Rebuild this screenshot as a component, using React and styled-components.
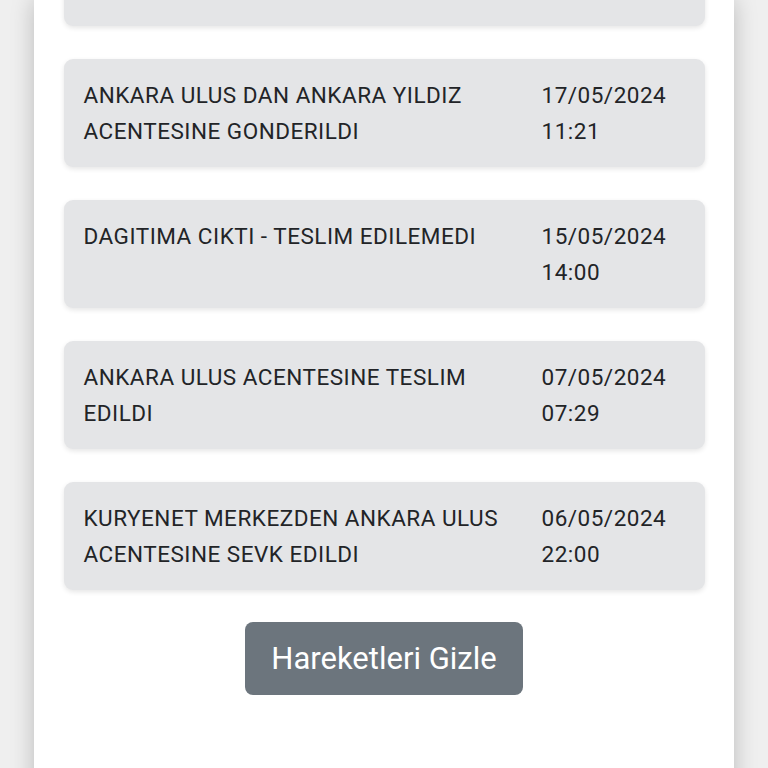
import React from "react";
import styled, { createGlobalStyle } from "styled-components";

const GlobalStyle = createGlobalStyle`
  html, body {
    margin: 0;
    padding: 0;
    height: 100%;
    overflow: hidden;
    background: #efefef;
    font-family: Roboto, "Liberation Sans", sans-serif;
  }
`;

const movements = [
  { text: "ANKARA ULUS DAN ANKARA YILDIZ ACENTESINE GONDERILDI", date: "17/05/2024", time: "11:21" },
  { text: "DAGITIMA CIKTI - TESLIM EDILEMEDI", date: "15/05/2024", time: "14:00" },
  { text: "ANKARA ULUS ACENTESINE TESLIM EDILDI", date: "07/05/2024", time: "07:29" },
  { text: "KURYENET MERKEZDEN ANKARA ULUS ACENTESINE SEVK EDILDI", date: "06/05/2024", time: "22:00" },
];

function App() {
  return (
    <Page>
      <GlobalStyle />
      <Panel>
        <List>
          {/* previous movement, scrolled out of view */}
          <Card />
          {movements.map((m) => (
            <Card key={m.date + m.time}>
              <Desc>{m.text}</Desc>
              <When>
                {m.date}
                <br />
                {m.time}
              </When>
            </Card>
          ))}
        </List>
        <Actions>
          <HideButton>Hareketleri Gizle</HideButton>
        </Actions>
      </Panel>
    </Page>
  );
}

export default App;

const Page = styled.div`
  height: 768px;
  display: flex;
  justify-content: center;
  overflow: hidden;
`;

const Panel = styled.div`
  width: 700px;
  margin-left: -1px;
  min-height: 900px;
  background: #ffffff;
  box-shadow: 0 0 22px rgba(0, 0, 0, 0.22);
  padding: 0 29px 0 30px;
  box-sizing: border-box;
`;

const List = styled.div`
  margin-top: -82px;
  display: flex;
  flex-direction: column;
  gap: 33px;
`;

const Card = styled.div`
  display: flex;
  justify-content: space-between;
  background: #e4e5e7;
  border-radius: 9px;
  box-shadow: 0 2px 5px rgba(0, 0, 0, 0.1);
  padding: 18px 20px;
  height: 108px;
  box-sizing: border-box;
  color: #222427;
  font-size: 22.5px;
  line-height: 36px;
  letter-spacing: 0.5px;
`;

const Desc = styled.div`
  width: 430px;
`;

const When = styled.div`
  width: 143px;
  flex-shrink: 0;
`;

const Actions = styled.div`
  display: flex;
  justify-content: center;
  padding-top: 32px;
`;

const HideButton = styled.button`
  width: 278px;
  height: 73px;
  padding: 0;
  border: none;
  border-radius: 8px;
  background: #6c757d;
  color: #ffffff;
  font-family: Roboto, "Liberation Sans", sans-serif;
  font-size: 31px;
  cursor: pointer;
`;
